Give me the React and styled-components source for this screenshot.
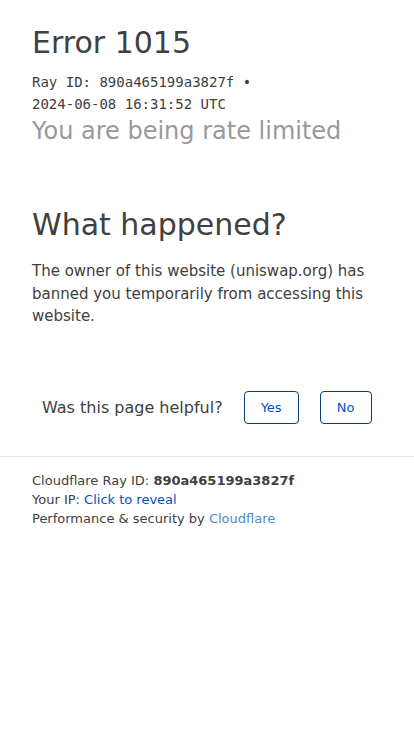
import React from 'react';
import styled, { createGlobalStyle } from 'styled-components';

const GlobalStyle = createGlobalStyle`
  html, body {
    margin: 0;
    padding: 0;
    background: #fff;
    font-family: "DejaVu Sans", "Noto Sans", sans-serif;
    color: #404040;
  }
`;

const Page = styled.div`
  display: flex;
  flex-direction: column;
`;

const Header = styled.section`
  padding: 23px 32px 0;
`;

const Title = styled.h1`
  margin: 0;
  font-size: 30px;
  font-weight: 400;
  line-height: 40px;
  color: #404040;
`;

const RayLine = styled.div`
  margin-top: 8px;
  font-family: "DejaVu Sans Mono", monospace;
  font-size: 14px;
  line-height: 22px;
  color: #404040;
`;

const Subtitle = styled.h2`
  margin: 0;
  font-size: 24px;
  font-weight: 400;
  line-height: 32px;
  color: #999;
`;

const Overview = styled.section`
  padding: 58px 32px 0;
`;

const Heading = styled.h2`
  margin: 0;
  font-size: 30px;
  font-weight: 400;
  line-height: 40px;
  color: #404040;
`;

const Text = styled.p`
  margin: 15px 0 0;
  font-size: 15px;
  line-height: 22.5px;
  color: #404040;
`;

const Feedback = styled.div`
  display: flex;
  align-items: center;
  height: 128px;
  box-sizing: border-box;
  padding: 31px 42px 0;
`;

const Question = styled.span`
  flex-shrink: 0;
  white-space: nowrap;
  font-size: 16px;
  color: #404040;
  margin-right: 21px;
`;

const FeedbackButton = styled.button`
  flex-shrink: 0;
  height: 33px;
  width: ${(p) => p.$w}px;
  margin-right: 21px;
  padding: 0;
  border: 1px solid #0a3f7e;
  border-radius: 4px;
  background: #fff;
  color: #0051c3;
  font-family: "DejaVu Sans", sans-serif;
  font-size: 13px;
`;

const Footer = styled.footer`
  border-top: 1px solid #e5e5e5;
  padding: 14px 32px 0;
  font-size: 13px;
  line-height: 19px;
  color: #404040;
`;

const Row = styled.div``;

const Strong = styled.span`
  font-weight: 700;
`;

const Link = styled.a`
  color: ${(p) => (p.$light ? '#4a8bcf' : '#0051c3')};
  text-decoration: none;
`;

export default function App() {
  return (
    <Page>
      <GlobalStyle />
      <Header>
        <Title>Error 1015</Title>
        <RayLine>
          Ray ID: 890a465199a3827f •
          <br />
          2024-06-08 16:31:52 UTC
        </RayLine>
        <Subtitle>You are being rate limited</Subtitle>
      </Header>
      <Overview>
        <Heading>What happened?</Heading>
        <Text>
          The owner of this website (uniswap.org) has banned you temporarily from accessing this website.
        </Text>
      </Overview>
      <Feedback>
        <Question>Was this page helpful?</Question>
        <FeedbackButton $w={55}>Yes</FeedbackButton>
        <FeedbackButton $w={52}>No</FeedbackButton>
      </Feedback>
      <Footer>
        <Row>
          Cloudflare Ray ID: <Strong>890a465199a3827f</Strong>
        </Row>
        <Row>
          Your IP: <Link href="#">Click to reveal</Link>
        </Row>
        <Row>
          Performance &amp; security by <Link $light href="#">Cloudflare</Link>
        </Row>
      </Footer>
    </Page>
  );
}
